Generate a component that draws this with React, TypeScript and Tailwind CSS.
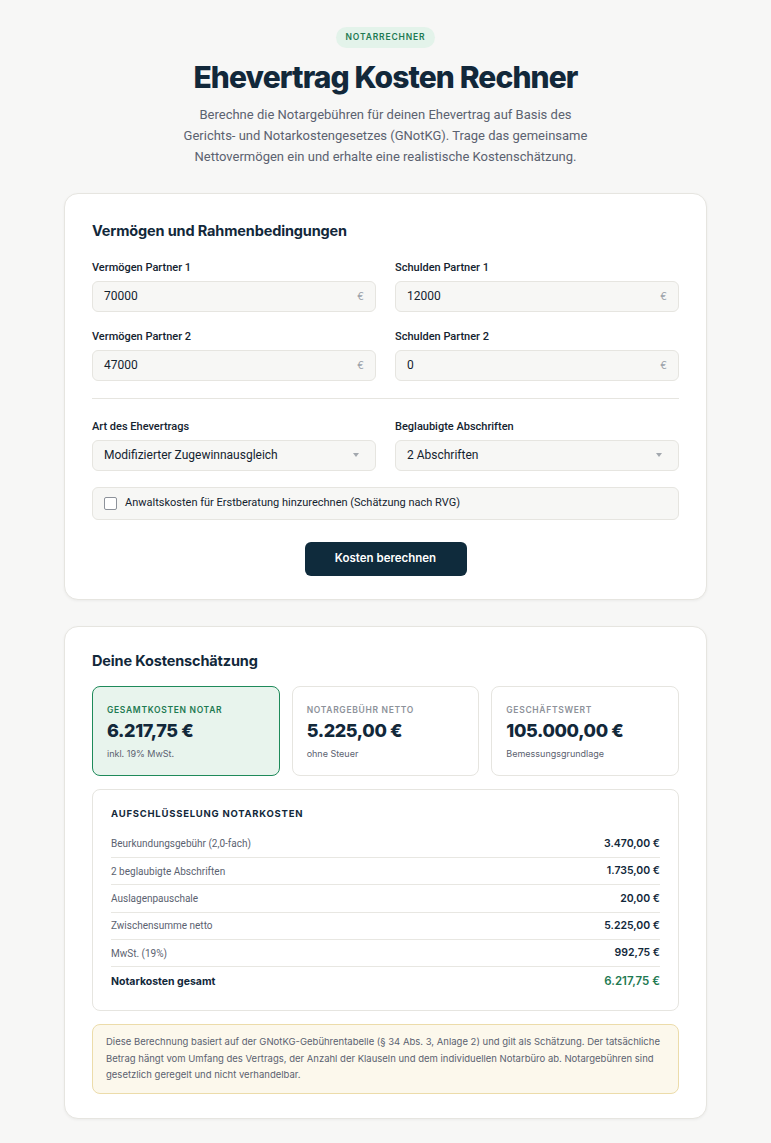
import React, { useState } from 'react';

const font = { fontFamily: 'Inter, "Noto Sans", sans-serif' };
const body = { fontFamily: 'Roboto, "Noto Sans", sans-serif' };

function MoneyInput({ label, value }: { label: string; value: string }) {
    return (
        <div className="flex flex-col gap-[6px]">
            <label className="text-[11px] leading-[15px] font-medium text-[#14232f]" style={body}>
                {label}
            </label>
            <div className="flex items-center h-[31px] px-[11px] bg-[#f7f7f5] border border-[#e6e5e0] rounded-[6px]">
                <span className="flex-1 text-[12px] text-[#14232f]" style={body}>
                    {value}
                </span>
                <span className="text-[10px] text-[#9aa0a8]">€</span>
            </div>
        </div>
    );
}

function SelectBox({ label, value }: { label: string; value: string }) {
    return (
        <div className="flex flex-col gap-[6px]">
            <label className="text-[11px] leading-[15px] font-medium text-[#14232f]" style={body}>
                {label}
            </label>
            <div className="flex items-center h-[31px] px-[11px] bg-[#f7f7f5] border border-[#e6e5e0] rounded-[6px]">
                <span className="flex-1 text-[12px] text-[#14232f]" style={body}>
                    {value}
                </span>
                <svg width="6" height="4" viewBox="0 0 6 4" className="mr-[5px]">
                    <path d="M0 0h6L3 4z" fill="#a3a8ae" />
                </svg>
            </div>
        </div>
    );
}

function Stat({ title, value, sub, active }: { title: string; value: string; sub: string; active?: boolean }) {
    return (
        <div
            className={
                active
                    ? 'h-[90px] rounded-[8px] border border-[#1e8a5a] bg-[#e8f4ed] px-[14px] pt-[17px]'
                    : 'h-[90px] rounded-[8px] border border-[#e6e5e0] bg-white px-[14px] pt-[17px]'
            }
        >
            <div className={active ? 'text-[8.5px] font-semibold tracking-[0.08em] text-[#1e7a52]' : 'text-[8.5px] font-semibold tracking-[0.08em] text-[#8d929a]'}>
                {title}
            </div>
            <div className="text-[18px] font-extrabold tracking-[-0.02em] text-[#12283a]">{value}</div>
            <div className="mt-[3px] text-[9px] text-[#5b6270]">{sub}</div>
        </div>
    );
}

const rows = [
    ['Beurkundungsgebühr (2,0-fach)', '3.470,00 €'],
    ['2 beglaubigte Abschriften', '1.735,00 €'],
    ['Auslagenpauschale', '20,00 €'],
    ['Zwischensumme netto', '5.225,00 €'],
    ['MwSt. (19%)', '992,75 €'],
];

export default function App() {
    const [lawyer, setLawyer] = useState(false);

    return (
        <div className="min-h-screen bg-[#f7f7f6] pt-[27px] pb-[25px]" style={font}>
            <header className="flex flex-col items-center text-center">
                <span className="rounded-full bg-[#e3f3ea] px-[10px] py-[4px] text-[8.5px] font-semibold tracking-[0.1em] text-[#1e7a52]">
                    NOTARRECHNER
                </span>
                <h1 className="mt-[9px] text-[30px] font-extrabold leading-[40px] tracking-[-0.03em] text-[#12283a]">
                    Ehevertrag Kosten Rechner
                </h1>
                <p className="mt-[7px] w-[412px] text-[13px] leading-[21px] text-[#5b6270]" style={body}>
                    Berechne die Notargebühren für deinen Ehevertrag auf Basis des Gerichts- und Notarkostengesetzes (GNotKG). Trage das gemeinsame Nettovermögen ein und erhalte eine realistische Kostenschätzung.
                </p>
            </header>

            <section className="mx-auto mt-[26px] w-[643px] rounded-[14px] border border-[#e6e5e0] bg-white px-[27px] pt-[26px] pb-[23px] shadow-[0_1px_3px_rgba(0,0,0,0.05)]">
                <h2 className="text-[14.5px] font-bold tracking-[-0.01em] text-[#12283a]">Vermögen und Rahmenbedingungen</h2>
                <div className="mt-[18px] grid grid-cols-2 gap-x-[19px] gap-y-[17px]">
                    <MoneyInput label="Vermögen Partner 1" value="70000" />
                    <MoneyInput label="Schulden Partner 1" value="12000" />
                    <MoneyInput label="Vermögen Partner 2" value="47000" />
                    <MoneyInput label="Schulden Partner 2" value="0" />
                </div>
                <div className="mt-[17px] mb-[20px] h-px bg-[#e6e5e0]" />
                <div className="grid grid-cols-2 gap-x-[19px]">
                    <SelectBox label="Art des Ehevertrags" value="Modifizierter Zugewinnausgleich" />
                    <SelectBox label="Beglaubigte Abschriften" value="2 Abschriften" />
                </div>
                <label className="mt-[16px] flex h-[33px] cursor-pointer items-center gap-[8px] rounded-[6px] border border-[#e6e5e0] bg-[#f7f7f5] px-[11px]">
                    <input
                        type="checkbox"
                        checked={lawyer}
                        onChange={(e) => setLawyer(e.target.checked)}
                        className="h-[13px] w-[13px] appearance-none rounded-[2px] border border-[#8d929a] bg-white"
                    />
                    <span className="text-[11px] text-[#14232f]" style={body}>
                        Anwaltskosten für Erstberatung hinzurechnen (Schätzung nach RVG)
                    </span>
                </label>
                <div className="mt-[22px] flex justify-center">
                    <button className="h-[34px] w-[162px] rounded-[6px] bg-[#0f2b3c] text-[11.5px] font-semibold text-white">
                        Kosten berechnen
                    </button>
                </div>
            </section>

            <section className="mx-auto mt-[26px] w-[643px] rounded-[14px] border border-[#e6e5e0] bg-white px-[27px] pt-[23px] pb-[24px] shadow-[0_1px_3px_rgba(0,0,0,0.05)]">
                <h2 className="text-[14.5px] font-bold tracking-[-0.01em] text-[#12283a]">Deine Kostenschätzung</h2>
                <div className="mt-[15px] grid grid-cols-3 gap-[12px]">
                    <Stat title="GESAMTKOSTEN NOTAR" value="6.217,75 €" sub="inkl. 19% MwSt." active />
                    <Stat title="NOTARGEBÜHR NETTO" value="5.225,00 €" sub="ohne Steuer" />
                    <Stat title="GESCHÄFTSWERT" value="105.000,00 €" sub="Bemessungsgrundlage" />
                </div>

                <div className="mt-[13px] rounded-[8px] border border-[#e6e5e0] px-[18px] pt-[17px] pb-[15px]">
                    <h3 className="text-[9.5px] font-bold tracking-[0.08em] text-[#12283a]">AUFSCHLÜSSELUNG NOTARKOSTEN</h3>
                    <div className="mt-[9px]">
                        {rows.map(([k, v]) => (
                            <div key={k} className="flex h-[27.4px] items-center justify-between border-b border-[#e8e7e2] text-[10.5px]">
                                <span className="text-[10px] text-[#5b6270]" style={body}>
                                    {k}
                                </span>
                                <span className="font-semibold text-[#12283a]">{v}</span>
                            </div>
                        ))}
                        <div className="flex h-[28px] items-center justify-between text-[10.5px]">
                            <span className="font-bold text-[#12283a]">Notarkosten gesamt</span>
                            <span className="text-[11.5px] font-semibold text-[#1e7a52]">6.217,75 €</span>
                        </div>
                    </div>
                </div>

                <div className="mt-[13px] rounded-[8px] border border-[#ecdcaa] bg-[#fcf8ec] px-[13px] py-[9px] text-[9.5px] leading-[16.5px] text-[#5b6270]">
                    Diese Berechnung basiert auf der GNotKG-Gebührentabelle (§ 34 Abs. 3, Anlage 2) und gilt als Schätzung. Der tatsächliche Betrag hängt vom Umfang des Vertrags, der Anzahl der Klauseln und dem individuellen Notarbüro ab. Notargebühren sind gesetzlich geregelt und nicht verhandelbar.
                </div>
            </section>
        </div>
    );
}
